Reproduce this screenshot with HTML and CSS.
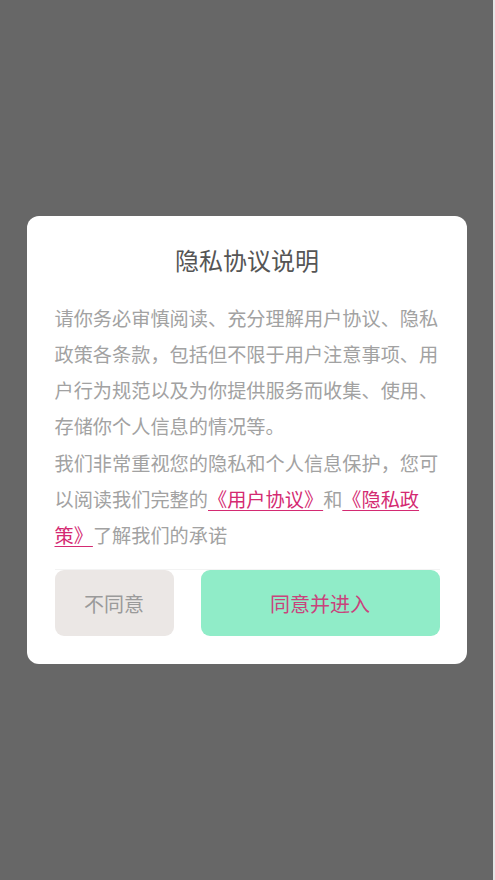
FILE: index.html
```html
<!DOCTYPE html>
<html lang="zh">
<head>
<meta charset="utf-8">
<title>隐私协议说明</title>
<link rel="stylesheet" href="styles.css">
</head>
<body>
<div class="overlay">
  <div class="modal">
    <h1 class="title">隐私协议说明</h1>
    <div class="content">
      <p>请你务必审慎阅读、充分理解用户协议、隐私政策各条款，包括但不限于用户注意事项、用户行为规范以及为你提供服务而收集、使用、存储你个人信息的情况等。</p>
      <p>我们非常重视您的隐私和个人信息保护，您可以阅读我们完整的<a class="link" href="#">《用户协议》</a>和<a class="link" href="#">《隐私政策》</a>了解我们的承诺</p>
    </div>
    <div class="actions">
      <button class="btn btn-decline">不同意</button>
      <button class="btn btn-agree">同意并进入</button>
    </div>
  </div>
</div>
</body>
</html>
```

FILE: styles.css
```css
html, body {
  margin: 0;
  padding: 0;
  height: 100%;
}
body {
  background: #676767;
  border-right: 2px solid #e6e6e6;
  box-sizing: border-box;
  font-family: "Noto Sans CJK SC", "Noto Sans", sans-serif;
}
.overlay {
  height: 100%;
  display: flex;
  align-items: center;
  justify-content: center;
}
.modal {
  width: 440px;
  box-sizing: border-box;
  background: #ffffff;
  border-radius: 12px;
  padding: 28px 27px 28px 28px;
}
.title {
  margin: 0;
  font-size: 24px;
  line-height: 32px;
  font-weight: 400;
  color: #555555;
  text-align: center;
}
.content {
  margin-top: 24px;
  font-size: 19.2px;
  line-height: 36.2px;
  color: #a2a2a2;
}
.content p {
  margin: 0;
}
.link {
  color: #d42a72;
  text-decoration: underline;
  text-underline-offset: 3px;
}
.actions {
  margin-top: 16px;
  border-top: 1px solid #f3f3f3;
  display: flex;
  gap: 27px;
}
.btn {
  border: none;
  height: 66px;
  border-radius: 9px;
  font-family: inherit;
  font-size: 20px;
  padding: 0;
}
.btn-decline {
  width: 119px;
  background: #ebe7e5;
  color: #9a9a9a;
}
.btn-agree {
  flex: 1;
  background: #90ecc8;
  color: #c9437c;
}
```
